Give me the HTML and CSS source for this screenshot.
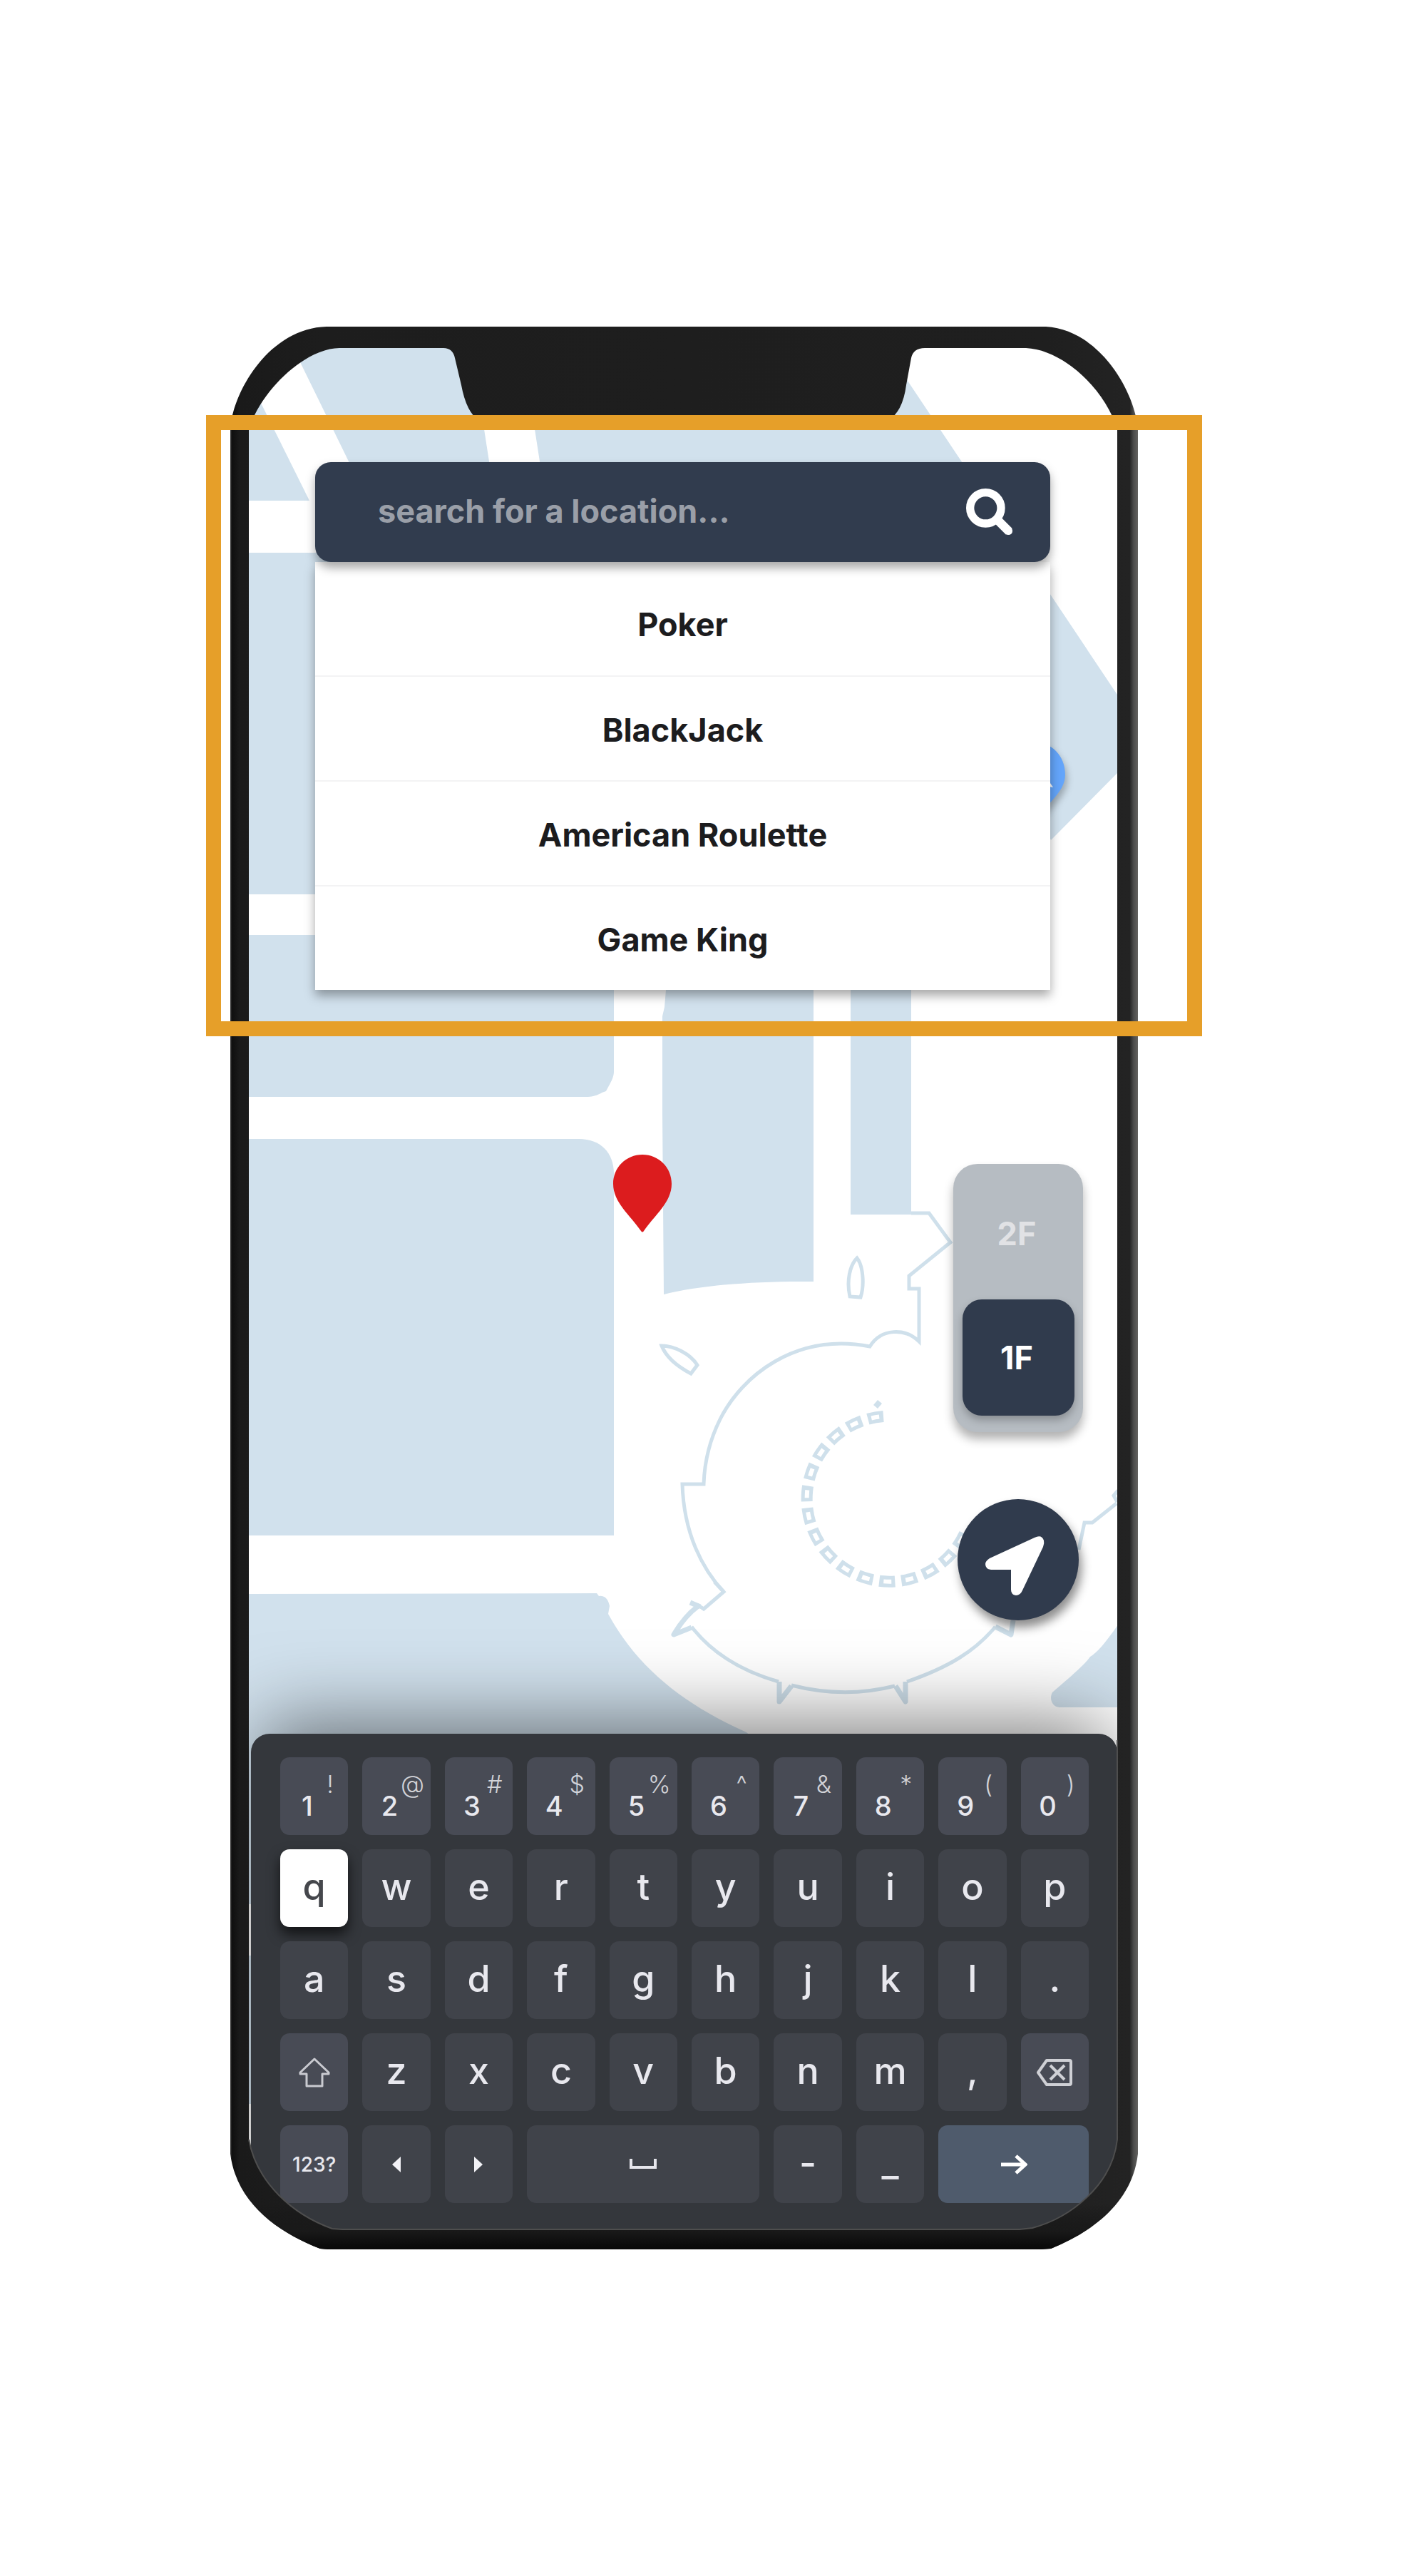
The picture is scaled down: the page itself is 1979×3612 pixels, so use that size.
FILE: index.html
```html
<!DOCTYPE html>
<html lang="en">
<head>
<meta charset="utf-8">
<meta name="viewport" content="width=device-width, initial-scale=1">
<title>Location search</title>
<link rel="stylesheet" href="styles.css">
</head>
<body>
<main class="stage">
  <div class="phone">
    <svg class="map" viewBox="323 458 1273 2696" preserveAspectRatio="none" aria-hidden="true">
      <path class="ground" d="M323 470H1596V3140H323Z" clip-path="url(#glass)"/>
      <clipPath id="glass"><path d="M345 598C361 541 430 484 476 484H1439C1490 486 1556 541 1571 598V3000C1560 3065 1500 3112 1448 3128H466C410 3109 356 3060 345 3000Z"/></clipPath>
      <g class="block" clip-path="url(#glass)">
        <path d="M345 523L434 702H345Z"/>
        <path d="M411 480C414 492 420 506 424 514L450 567L489 647L515 700H688L686 647L679 602L660 480Z"/>
        <path d="M736 480L750 602L757 647L765 700H1240L1474 1178L1567 1084V974L1237 480Z"/>
        <path d="M345 775H860V1254H345Z"/>
        <path d="M345 1311H861V1503C861 1512 854 1522 850 1530C842 1532 838 1538 822 1538H345Z"/>
        <path d="M345 1597H812C842 1597 861 1616 861 1646V2153H345Z"/>
        <path d="M345 2235L837 2234L840 2238C850 2236 854 2246 855 2252L853 2263C895 2340 960 2390 1047 2429L1060 2440V2670H345Z"/>
        <path d="M345 2742H500V2950H345Z"/>
        <path d="M934 1380V1388L932 1412L929 1425V1560L931 1815C980 1803 1050 1796 1141 1797V1380Z"/>
        <path d="M1193 1380H1278V1703H1193Z"/>
        <path d="M1571 2274C1556 2296 1540 2317 1529 2323C1520 2336 1493 2358 1476 2373C1471 2382 1476 2394 1486 2394H1571Z"/>
      </g>
      <g class="outline">
        <path d="M1278 1701H1303L1333 1742L1275 1789V1807H1289V1881C1270 1862 1236 1862 1220 1888C1115 1868 1040 1930 1010 1990C996 2018 988 2050 987 2081H957C959 2150 985 2200 1015 2232L987 2256L978 2250"/>
        <path d="M970 2281C1004 2325 1050 2346 1092 2358M1110 2363Q1184 2382 1255 2364M1272 2358C1330 2338 1368 2315 1396 2281M1513 2173L1521 2135H1532L1566 2108M1568 2090L1562 2097L1567 2106"/>
        <path d="M1002 2218L1015 2232"/>
        <path d="M1202 1764C1210 1774 1213 1800 1207 1819L1192 1818C1187 1796 1192 1774 1202 1764Z"/>
        <path d="M928 1887C945 1887 968 1898 978 1914L969 1926C950 1916 934 1902 928 1887Z"/>
      </g>
      <g class="spike">
        <path d="M968 2247L982 2253M978 2253C962 2265 952 2280 945 2292L970 2282"/>
        <path d="M1093 2358V2386L1110 2364M1256 2364L1270 2386V2358M1396 2281L1418 2292L1421 2272"/>
      </g>
      <path class="stalls" d="M1239 1986A116 116 0 1 0 1354 2148"/>
      <path class="stalls-inner" d="M1239 1986A116 116 0 1 0 1354 2148"/>
      <path class="stall-dot" d="M1231 1963L1237 1968L1231 1975L1225 1970Z"/>
      <path class="pin-red" d="M901 1619C924 1619 942 1637 942 1660C942 1686 918 1704 903 1726Q901 1729 899 1726C884 1704 860 1686 860 1660C860 1637 878 1619 901 1619Z"/>
      <path class="pin-blue" d="M1449 1040C1475 1040 1494 1060 1494 1086C1494 1112 1466 1128 1449 1154C1432 1128 1408 1112 1408 1086C1408 1060 1424 1040 1449 1040Z"/>
      <path class="pin-mark" d="M1453 1068L1477 1104L1453 1100Z"/>
    </svg>

    <div class="screen">
      <section class="search" aria-label="Location search">
        <form class="search-bar" role="search">
          <input class="search-input" type="text" aria-label="Search for a location" placeholder="search for a location...">
          <button class="search-button" type="button" aria-label="Search">
            <svg viewBox="0 0 70 70" width="66" height="66" aria-hidden="true">
              <circle cx="29" cy="29" r="23" fill="none" stroke="#fff" stroke-width="12"/>
              <path d="M46 46L64 64" stroke="#fff" stroke-width="13" fill="none"/>
              <circle cx="63" cy="63" r="6" fill="#fff"/>
            </svg>
          </button>
        </form>
        <ul class="results">
          <li><button type="button" class="result">Poker</button></li>
          <li><button type="button" class="result">BlackJack</button></li>
          <li><button type="button" class="result">American Roulette</button></li>
          <li><button type="button" class="result">Game King</button></li>
        </ul>
      </section>

      <div class="floors" role="group" aria-label="Floor">
        <button type="button" class="floor">2F</button>
        <button type="button" class="floor floor-active" aria-pressed="true">1F</button>
      </div>

      <button type="button" class="locate" aria-label="My location">
        <svg viewBox="0 0 170 170" width="170" height="170" aria-hidden="true">
          <path d="M108 54Q118 49 121 58Q122 62 120 67L91 128Q88 135 82 135Q75 134 75 127V99H47Q39 98 39 91Q39 87 45 83Z" fill="#fff"/>
        </svg>
      </button>

      <div class="keyboard" role="group" aria-label="Keyboard">
        <button type="button" class="key key-num"><span>1</span><sup>!</sup></button>
        <button type="button" class="key key-num"><span>2</span><sup>@</sup></button>
        <button type="button" class="key key-num"><span>3</span><sup>#</sup></button>
        <button type="button" class="key key-num"><span>4</span><sup>$</sup></button>
        <button type="button" class="key key-num"><span>5</span><sup>%</sup></button>
        <button type="button" class="key key-num"><span>6</span><sup>^</sup></button>
        <button type="button" class="key key-num"><span>7</span><sup>&amp;</sup></button>
        <button type="button" class="key key-num"><span>8</span><sup>*</sup></button>
        <button type="button" class="key key-num"><span>9</span><sup>(</sup></button>
        <button type="button" class="key key-num"><span>0</span><sup>)</sup></button>

        <button type="button" class="key key-pressed">q</button>
        <button type="button" class="key">w</button>
        <button type="button" class="key">e</button>
        <button type="button" class="key">r</button>
        <button type="button" class="key">t</button>
        <button type="button" class="key">y</button>
        <button type="button" class="key">u</button>
        <button type="button" class="key">i</button>
        <button type="button" class="key">o</button>
        <button type="button" class="key">p</button>

        <button type="button" class="key">a</button>
        <button type="button" class="key">s</button>
        <button type="button" class="key">d</button>
        <button type="button" class="key">f</button>
        <button type="button" class="key">g</button>
        <button type="button" class="key">h</button>
        <button type="button" class="key">j</button>
        <button type="button" class="key">k</button>
        <button type="button" class="key">l</button>
        <button type="button" class="key">.</button>

        <button type="button" class="key key-icon key-alt" aria-label="Shift">
          <svg viewBox="0 0 44 42" width="44" height="42" aria-hidden="true"><path d="M22 2L42 21V23H33V40H11V23H2V21Z" fill="none" stroke="#c9cad0" stroke-width="3" stroke-linejoin="round"/></svg>
        </button>
        <button type="button" class="key">z</button>
        <button type="button" class="key">x</button>
        <button type="button" class="key">c</button>
        <button type="button" class="key">v</button>
        <button type="button" class="key">b</button>
        <button type="button" class="key">n</button>
        <button type="button" class="key">m</button>
        <button type="button" class="key">,</button>
        <button type="button" class="key key-icon key-alt" aria-label="Backspace">
          <svg viewBox="0 0 50 38" width="50" height="38" aria-hidden="true"><path d="M14 2H46Q48 2 48 4V34Q48 36 46 36H14L2 19ZM19 9L39 29M39 9L19 29" fill="none" stroke="#cfd0d5" stroke-width="4" stroke-linejoin="round"/></svg>
        </button>

        <button type="button" class="key key-icon key-alt key-mode">123?</button>
        <button type="button" class="key key-icon" aria-label="Cursor left">
          <svg viewBox="0 0 14 22" width="14" height="22" aria-hidden="true"><path d="M13 0V22L1 11Z" fill="#f2f2f6"/></svg>
        </button>
        <button type="button" class="key key-icon" aria-label="Cursor right">
          <svg viewBox="0 0 14 22" width="14" height="22" aria-hidden="true"><path d="M1 0V22L13 11Z" fill="#f2f2f6"/></svg>
        </button>
        <button type="button" class="key key-icon key-space" aria-label="Space">
          <svg viewBox="0 0 38 15" width="38" height="15" aria-hidden="true"><path d="M2 0V12H36V0" fill="none" stroke="#e6e6ec" stroke-width="4"/></svg>
        </button>
        <button type="button" class="key">-</button>
        <button type="button" class="key">_</button>
        <button type="button" class="key key-icon key-enter" aria-label="Go">
          <svg viewBox="0 0 38 28" width="38" height="28" aria-hidden="true"><path d="M1 14H35M22 2L35 14L22 26" fill="none" stroke="#fff" stroke-width="5"/></svg>
        </button>
      </div>
    </div>

    <svg class="bezel" viewBox="323 458 1273 2696" preserveAspectRatio="none" aria-hidden="true">
      <defs>
        <linearGradient id="metal" x1="0" x2="1" y1="0" y2="0">
          <stop offset="0" stop-color="#3a3a3a"/>
          <stop offset=".002" stop-color="#0f0f0f"/>
          <stop offset=".01" stop-color="#1a1a1a"/>
          <stop offset=".1" stop-color="#1d1d1d"/>
          <stop offset=".9" stop-color="#1f1f1f"/>
          <stop offset=".991" stop-color="#232323"/>
          <stop offset=".995" stop-color="#4a4a49"/>
          <stop offset="1" stop-color="#63625f"/>
        </linearGradient>
        <linearGradient id="foot" x1="0" x2="0" y1="3090" y2="3154" gradientUnits="userSpaceOnUse">
          <stop offset="0" stop-color="#161616" stop-opacity="0"/>
          <stop offset=".6" stop-color="#191919"/>
          <stop offset="1" stop-color="#080808"/>
        </linearGradient>
        <path id="body-shape" d="M323 600C328 545 380 460 458 458H1467C1540 462 1590 545 1596 600V3020C1588 3090 1530 3130 1474 3153L1460 3154H460L449 3153C390 3130 332 3090 323 3020ZM349 602V3000C360 3060 410 3105 466 3125L480 3126H1430L1448 3124C1500 3110 1560 3065 1567 3000V602C1550 545 1490 490 1439 488H1297Q1281 488 1278 502L1271 540Q1266 578 1245 590H672Q654 578 647 540L638 502Q635 488 622 488H476C430 488 367 545 349 602Z"/>
      </defs>
      <use href="#body-shape" fill="url(#metal)" fill-rule="evenodd"/>
      <use href="#body-shape" fill="url(#foot)" fill-rule="evenodd"/>
      <path d="M349 3000C360 3060 410 3105 466 3125L480 3126H1430L1448 3124C1500 3110 1560 3065 1567 3000V2440" fill="none" stroke="#4e4e4e" stroke-width="2"/>
    </svg>
  </div>
</main>
</body>
</html>
```
FILE: styles.css
```css
*,
*::before,
*::after {
  box-sizing: border-box;
}

body {
  margin: 0;
  background: #fff;
  font-family: Inter, "Liberation Sans", sans-serif;
  color: #1c1c1e;
}

button,
input {
  margin: 0;
  padding: 0;
  border: 0;
  background: none;
  color: inherit;
  font: inherit;
}

/* The phone sits slightly left of the middle of the page */
.stage {
  display: grid;
  grid-template-columns: 323fr minmax(0, 1273fr) 383fr;
  padding: 458px 0;
}

.phone {
  grid-column: 2;
  position: relative;
  padding: 30px 29px 28px 26px;
}

.map,
.bezel {
  position: absolute;
  inset: 0;
  width: 100%;
  height: 100%;
}

.bezel {
  z-index: 2;
  pointer-events: none;
}

/* Map drawing */
.ground {
  fill: #fff;
}

.block {
  fill: #d1e1ed;
}

.outline {
  fill: none;
  stroke: #cfe0eb;
  stroke-width: 5;
}

.spike {
  fill: none;
  stroke: #cfe0eb;
  stroke-width: 7;
  stroke-linejoin: round;
}

.stalls,
.stalls-inner {
  fill: none;
  stroke: #cfe0eb;
  stroke-width: 16;
  stroke-dasharray: 22 9;
}

.stalls-inner {
  stroke: #fff;
  stroke-width: 6;
  stroke-dasharray: 11 20;
  stroke-dashoffset: -6;
}

.stall-dot {
  fill: #cfe0eb;
}

.pin-red {
  fill: #dc1c1e;
}

.pin-blue {
  fill: #64a5fa;
  filter: drop-shadow(3px 7px 5px rgba(0, 0, 0, 0.25));
}

.pin-mark {
  fill: #fff;
}

/* Screen content */
.screen {
  position: relative;
  display: flex;
  flex-direction: column;
  align-items: flex-end;
  padding-top: 160px;
}

.search {
  position: relative;
  align-self: stretch;
  margin: 0 94px 0 93px;
}

.search::after {
  content: "";
  position: absolute;
  z-index: 3;
  inset: -66px -213px -65px -153px;
  border: 21px solid #e69f29;
  pointer-events: none;
}

.search-bar {
  position: relative;
  display: flex;
  align-items: center;
  height: 140px;
  padding: 0 52px 0 88px;
  border-radius: 22px;
  background: #313c4e;
  box-shadow: 0 8px 14px rgba(0, 0, 0, 0.35);
}

.search-input {
  flex: 1;
  min-width: 0;
  height: 64px;
  padding-bottom: 4px;
  font-size: 45px;
  font-weight: 700;
  color: #fff;
  outline: 0;
}

.search-input::placeholder {
  color: #9a9fa8;
  opacity: 1;
}

.search-button {
  display: flex;
}

.results {
  margin: 0;
  padding: 12px 0 0;
  list-style: none;
  background: #fff;
  box-shadow: 0 8px 14px rgba(0, 0, 0, 0.35);
}

.results li + li {
  border-top: 2px solid #f3f3f4;
}

.result {
  display: block;
  width: 100%;
  height: 147px;
  padding-top: 4px;
  font-size: 45px;
  font-weight: 700;
  line-height: 60px;
}

.results li + li .result {
  height: 145px;
}

.floors {
  display: flex;
  flex-direction: column;
  align-items: center;
  justify-content: space-between;
  width: 182px;
  height: 376px;
  margin: 244px 48px 0 0;
  padding: 16px 12px 23px;
  border-radius: 34px;
  background: #b6bcc2;
  box-shadow: 0 10px 14px rgba(0, 0, 0, 0.3);
}

.floor {
  width: 157px;
  height: 163px;
  padding-right: 4px;
  border-radius: 27px;
  font-size: 45px;
  font-weight: 700;
  color: #e1e2e5;
}

.floor-active {
  background: #303b4d;
  color: #fff;
  box-shadow: 0 6px 12px rgba(0, 0, 0, 0.25);
}

.locate {
  display: flex;
  width: 170px;
  height: 170px;
  margin: 94px 54px 0 0;
  border-radius: 50%;
  background: #303b4d;
  box-shadow: 4px 10px 14px rgba(0, 0, 0, 0.45);
}

/* Keyboard */
.keyboard {
  align-self: stretch;
  display: grid;
  grid-template-columns: repeat(10, minmax(0, 1fr));
  grid-auto-rows: 109px;
  gap: 20px;
  margin: 159px 0 0 3px;
  padding: 33px 40px 37px 41px;
  border-radius: 26px 26px 0 0;
  background: #34373c;
  box-shadow: 0 -30px 110px -14px rgba(0, 0, 0, 0.5);
  clip-path: inset(-160px 0 0 -3px round 0 0 100px 100px);
}

.key {
  display: flex;
  align-items: center;
  justify-content: center;
  padding-bottom: 4px;
  border-radius: 13px;
  background: #40434a;
  color: #e8e8ee;
  font-size: 52px;
  font-weight: 500;
  line-height: 64px;
}

.key-num {
  display: grid;
  grid-template-columns: 40px 24px;
  justify-content: start;
  justify-items: center;
  align-content: start;
  align-items: start;
  padding: 20px 0 0 18px;
  background: #484b55;
  font-size: 38px;
  line-height: 48px;
}

.key-num span {
  padding-top: 24px;
}

.key-num sup {
  font-size: 34px;
  font-weight: 300;
  line-height: 36px;
  vertical-align: baseline;
  color: #d2d3d8;
}

.key-pressed {
  background: #fff;
  color: #45474c;
  box-shadow: 0 10px 18px rgba(0, 0, 0, 0.65);
}

.key-icon {
  padding-bottom: 0;
}

.key-alt {
  background: #484b55;
}

.key-mode {
  font-size: 28px;
}

.key-space {
  grid-column: span 3;
}

.key-enter {
  grid-column: span 2;
  background: #4f5b6c;
}
```
